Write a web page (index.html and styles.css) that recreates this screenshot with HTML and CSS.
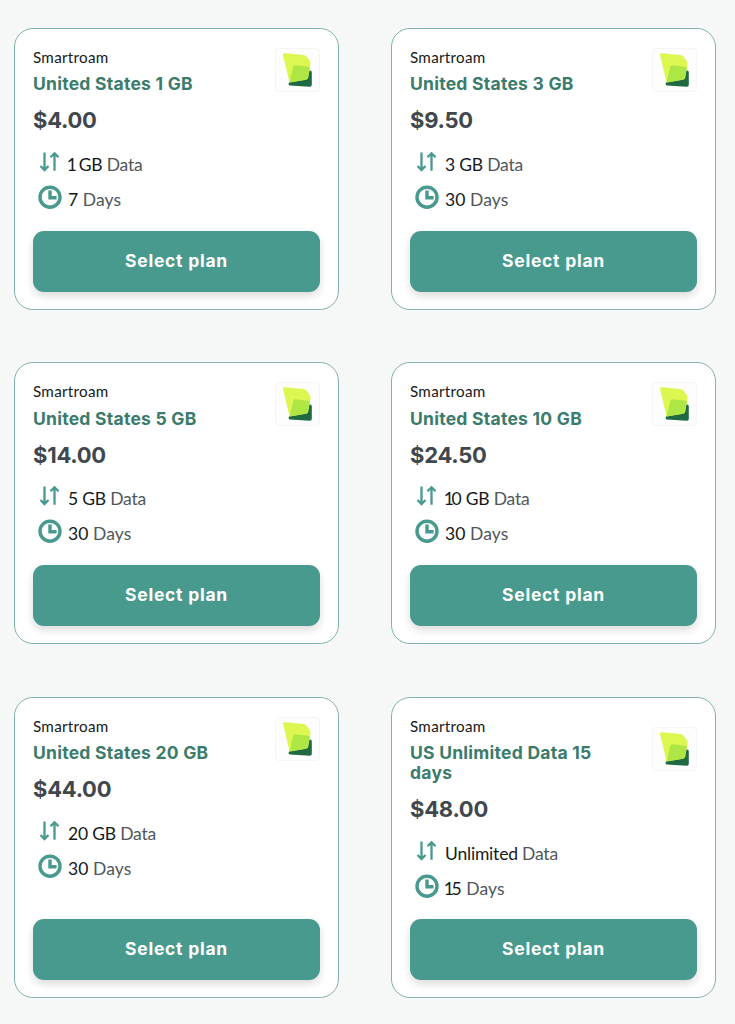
FILE: index.html
```html
<!DOCTYPE html>
<html lang="en">
<head>
<meta charset="utf-8">
<title>Plans</title>
<link rel="stylesheet" href="styles.css">
</head>
<body>
<svg class="sprite" aria-hidden="true">
  <symbol id="logo" viewBox="0 0 44 44">
    <path d="M14.6 34 32 27 34.5 22.5Q36.8 22 36.8 24.5V36.7Q36.8 38.8 34.8 38.7L15 37.6Q13.4 37.5 13.6 35.6Z" fill="#1f6a42"/>
    <path d="M9.8 5.2 28.5 7Q30.8 7.3 32.1 9.3L35 13.6Q35.8 14.9 35.4 16.5L33.3 29.5Q33 31.4 31 31.8L14.6 34.6 8 7Q7.6 5 9.8 5.2Z" fill="#dcf750"/>
    <path d="M20.3 17.2 33.4 18.8Q35.2 19.1 34.7 21L32.6 29.6Q32.2 31.4 30.6 31.7L14.6 34.6 18.2 19Q18.7 17 20.3 17.2Z" fill="#aee645"/>
  </symbol>
  <symbol id="arrows" viewBox="0 0 24 24">
    <path d="M6.5 2.5V19M2.5 16 6.5 20 10.5 16M16.5 20.8V3.5M12.5 7.3 16.5 3.3 20.5 7.3"/>
  </symbol>
  <symbol id="clock" viewBox="0 0 24 24">
    <circle cx="12" cy="12.2" r="10"/><path d="M12 5.6V12.8H18.6"/>
  </symbol>
</svg>
<main class="plans" id="plans"></main>
<script src="plans.js"></script>
</body>
</html>
```
FILE: plans.js
```js
const plans = [
  ["United States 1 GB", "$4.00", "1 GB", "7"],
  ["United States 3 GB", "$9.50", "3 GB", "30"],
  ["United States 5 GB", "$14.00", "5 GB", "30"],
  ["United States 10 GB", "$24.50", "10 GB", "30"],
  ["United States 20 GB", "$44.00", "20 GB", "30"],
  ["US Unlimited Data 15 days", "$48.00", "Unlimited", "15"],
];

// A leading "1" is set tight against the character after it.
const amount = (text) => text.replace(/^1/, '<span class="one">1</span>');

document.getElementById("plans").innerHTML = plans.map(([title, price, data, days]) => `
  <article class="card">
    <header class="card-head">
      <div class="card-names">
        <div class="brand">Smartroam</div>
        <h2 class="title">${title}</h2>
      </div>
      <div class="logo"><svg class="logo-mark"><use href="#logo"/></svg></div>
    </header>
    <div class="price">${price}</div>
    <div class="row"><svg class="icon"><use href="#arrows"/></svg><span class="spec spec-data"><b>${amount(data)}</b> Data</span></div>
    <div class="row"><svg class="icon icon-clock"><use href="#clock"/></svg><span class="spec"><b>${amount(days)}</b> Days</span></div>
    <button class="select">Select plan</button>
  </article>`).join("");
```
FILE: styles.css
```css
* { box-sizing: border-box; }
body {
  margin: 0;
  background: #f6f8f8;
  font-family: Lato, sans-serif;
  color: #15191b;
}
.sprite { display: none; }
.plans {
  display: grid;
  grid-template-columns: 325px 325px;
  grid-template-rows: 282px 282px 301.5px;
  gap: 52.49px 52px;
  padding: 28px 0 0 14px;
}
.card {
  display: flex;
  flex-direction: column;
  padding: 18px 18px 17.5px 18px;
  background: #fff;
  border: 1px solid #83b2ae;
  border-radius: 19px;
}
.card-head {
  display: flex;
  align-items: center;
  justify-content: space-between;
}
.card-names { width: 200px; }
.brand {
  font-size: 15.2px;
  line-height: 20px;
  letter-spacing: 0.3px;
}
.title {
  margin: 7.2px 0 0;
  font: 750 17.5px/19.8px Inter, sans-serif;
  letter-spacing: 0.25px;
  color: #3a7b6c;
}
.logo {
  width: 45px;
  height: 44px;
  margin-top: -1px;
  border: 1px solid #f5f5f5;
  border-radius: 4px;
  background: #fdfdfd;
}
.logo-mark { display: block; width: 44px; height: 44px; margin: -1px 0 0 -1px; }
.price {
  margin: 11.3px 0 10.5px;
  font: 750 22px/31px Inter, sans-serif;
  letter-spacing: -0.25px;
  color: #40474d;
}
.row {
  display: flex;
  align-items: center;
  height: 35px;
  padding-left: 5px;
}
.icon {
  width: 24px;
  height: 24px;
  margin: -5px 6px 0 0;
  fill: none;
  stroke: #48998e;
  stroke-width: 2.3;
}
.icon-clock { stroke-width: 3.4; }
.spec { font-size: 17.5px; letter-spacing: 0.1px; color: #50575c; }
.spec-data { letter-spacing: -0.2px; }
.spec b { font-weight: 400; color: #15191b; }
.one { margin-left: -1.3px; letter-spacing: -2.4px; }
.select {
  height: 61px;
  margin-top: auto;
  padding: 0;
  border: 0;
  border-radius: 11px;
  background: #48998e;
  color: #fff;
  font: 750 17.5px/60px Inter, sans-serif;
  letter-spacing: 0.75px;
  box-shadow: 0 4px 9px rgba(0, 0, 0, 0.14);
}
```
